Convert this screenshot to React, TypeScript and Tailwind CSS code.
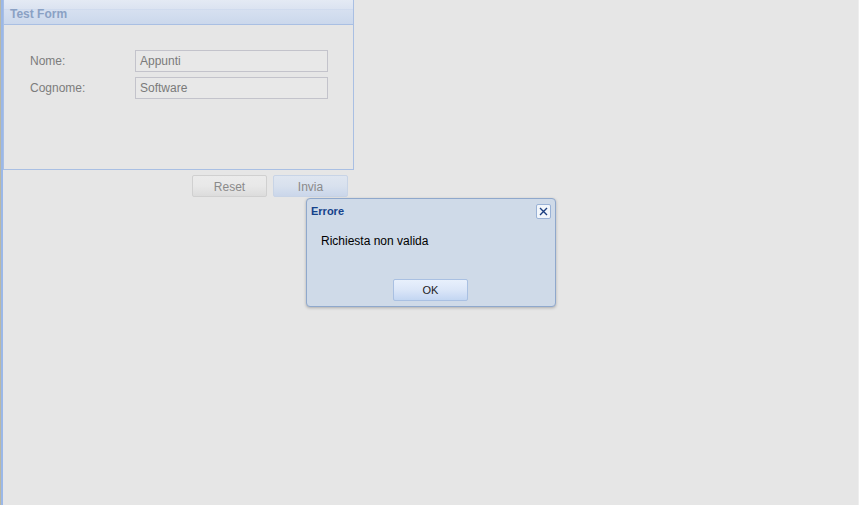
import React from "react";

export default function App() {
  const font = { fontFamily: '"Liberation Sans", Arial, sans-serif' };
  return (
    <div className="relative w-[859px] h-[505px] bg-[#e6e6e6] overflow-hidden flex" style={font}>
      <div className="w-[1px] h-full bg-[#b8b8a8]" />
      <div className="w-[2px] h-full bg-[#9bb8e8]" />
      <div className="flex flex-col w-[351px]">
        <div className="h-[170px] border border-t-0 border-[#a9bfe3] flex flex-col">
          <div className="relative h-[25px] border-b border-[#a9bfe3] flex flex-col">
            <div className="h-[10px] bg-gradient-to-b from-[#e4eaf4] to-[#dbe3f1] border-b border-[#d0dbee]" />
            <div className="flex-1 bg-gradient-to-b from-[#d6e0f0] to-[#cbd8ec]" />
            <div className="absolute left-[6px] top-[5px] text-[12px] font-bold text-[#8aa1c4]">Test Form</div>
          </div>
          <div className="flex flex-col gap-[5px] pt-[25px] pl-[26px]">
            <div className="flex items-center h-[22px]">
              <span className="w-[105px] text-[12px] text-[#7c7c7c]">Nome:</span>
              <div className="w-[193px] h-[22px] border border-[#c3c3cb] bg-[#e8e8e8] flex items-center pl-[4px] text-[12px] text-[#7a7a7a]">Appunti</div>
            </div>
            <div className="flex items-center h-[22px]">
              <span className="w-[105px] text-[12px] text-[#7c7c7c]">Cognome:</span>
              <div className="w-[193px] h-[22px] border border-[#c3c3cb] bg-[#e8e8e8] flex items-center pl-[4px] text-[12px] text-[#7a7a7a]">Software</div>
            </div>
          </div>
        </div>
        <div className="flex gap-[6px] pl-[189px] pt-[5px]">
          <div className="w-[75px] h-[22px] pt-[2px] rounded-[2px] border border-[#d0d0d0] bg-gradient-to-b from-[#ebebeb] via-[#e8e8e8] to-[#dcdcdc] flex items-center justify-center text-[12px] text-[#8a8a8a]">Reset</div>
          <div className="w-[75px] h-[22px] pt-[2px] rounded-[2px] border border-[#c8d4e6] bg-gradient-to-b from-[#dfe6f0] via-[#d8e1ee] to-[#cad6ea] flex items-center justify-center text-[12px] text-[#8a8a8a]">Invia</div>
        </div>
      </div>
      <div className="flex-1" />
      <div className="w-[1px] h-full bg-[#eeeeee]" />

      <div className="absolute left-[306px] top-[198px] w-[250px] h-[109px] rounded-[4px] border border-[#8fa8cc] bg-[#cfdae8] shadow-[0_1px_3px_rgba(0,0,0,0.25)] flex flex-col">
        <div className="flex items-center justify-between h-[24px] pl-[4px] pr-[4px]">
          <span className="text-[11px] font-bold text-[#15428b]">Errore</span>
          <div className="w-[15px] h-[15px] rounded-[2px] border border-[#9ab2d6] bg-[#f2f6fb] flex items-center justify-center">
            <svg width="9" height="9" viewBox="0 0 9 9">
              <path d="M1 1 L8 8 M8 1 L1 8" stroke="#1d3f80" strokeWidth="1.4" />
            </svg>
          </div>
        </div>
        <div className="pl-[14px] pt-[9px] text-[12px] text-black">Richiesta non valida</div>
        <div className="flex justify-center pt-[29px] pr-[1px]">
          <div className="w-[75px] h-[22px] rounded-[2px] border border-[#a9c0e2] bg-gradient-to-b from-[#e8f0fc] via-[#dbe6f8] to-[#c3d6f2] flex items-center justify-center text-[11px] text-[#222]">OK</div>
        </div>
      </div>
    </div>
  );
}
